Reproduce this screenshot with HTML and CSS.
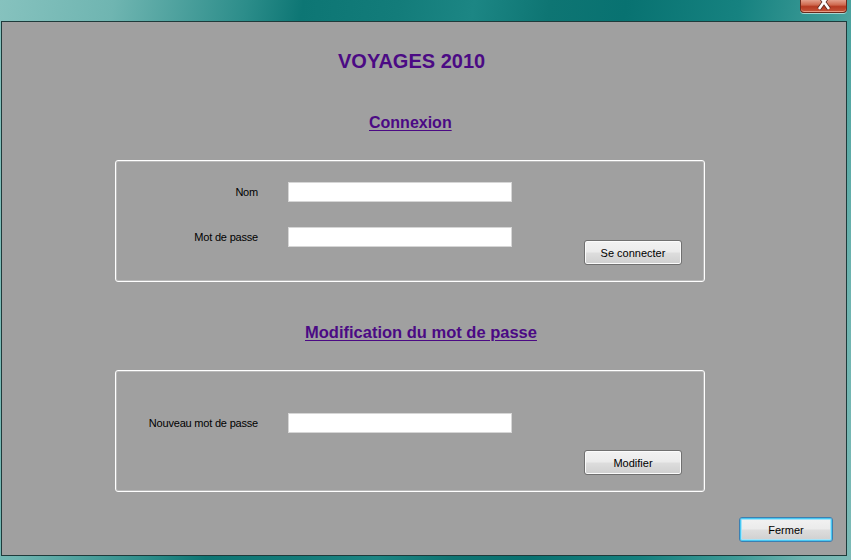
FILE: index.html
```html
<!DOCTYPE html>
<html lang="fr">
<head>
<meta charset="utf-8">
<title>VOYAGES 2010</title>
<link rel="stylesheet" href="styles.css">
</head>
<body>
<div class="window">
  <div class="titlebar">
    <div class="close-btn">
      <svg width="20" height="12" viewBox="0 0 20 12" aria-hidden="true">
        <path d="M5 -5 L15 9 M15 -5 L5 9" stroke="#5a2a20" stroke-width="4.2" stroke-linecap="butt"/>
        <path d="M5 -5 L15 9 M15 -5 L5 9" stroke="#ffffff" stroke-width="2.6" stroke-linecap="butt"/>
      </svg>
    </div>
  </div>
  <div class="client">
    <h1 class="app-title">VOYAGES 2010</h1>
    <h2 class="section-title sec-login">Connexion</h2>
    <div class="group group-login">
      <div class="row">
        <label class="lbl">Nom</label>
        <div class="field"></div>
      </div>
      <div class="row row-last">
        <label class="lbl">Mot de passe</label>
        <div class="field"></div>
        <button class="btn btn-login">Se connecter</button>
      </div>
    </div>
    <h2 class="section-title sec-change">Modification du mot de passe</h2>
    <div class="group group-change">
      <div class="row">
        <label class="lbl">Nouveau mot de passe</label>
        <div class="field"></div>
      </div>
      <button class="btn btn-modify">Modifier</button>
    </div>
    <button class="btn btn-close">Fermer</button>
  </div>
</div>
</body>
</html>
```

FILE: styles.css
```css
html, body {
  margin: 0;
  padding: 0;
}
body {
  width: 851px;
  height: 560px;
  overflow: hidden;
  font-family: "Liberation Sans", Arial, sans-serif;
}
.window {
  width: 851px;
  height: 560px;
  background: linear-gradient(100deg, #86c2be 0%, #6fb5b1 12%, #2c8d8a 26%, #0d7674 32%, #137c7a 42%, #1c8684 50%, #0e7573 58%, #087271 66%, #168280 78%, #3f9c98 88%, #6fb4b0 95%, #7cbab6 100%);
  display: flex;
  flex-direction: column;
}
.titlebar {
  height: 21px;
  flex: none;
  display: flex;
  justify-content: flex-end;
  align-items: flex-start;
  padding-right: 4px;
}
.close-btn {
  width: 45px;
  height: 12px;
  border: 1px solid #6a2a1c;
  border-top: 0;
  border-radius: 0 0 4px 4px;
  background: linear-gradient(#e4a08c 0%, #cf6a50 40%, #b63b22 55%, #c4553a 100%);
  box-shadow: inset 0 -1px 0 #e79a84, 0 1px 0 #a7d6d3;
  display: flex;
  justify-content: center;
  align-items: flex-start;
  overflow: hidden;
}
.client {
  margin-left: 1px;
  width: 844px;
  height: 533px;
  border: 1px solid #1e3b3b;
  background: #a0a0a0;
  display: flex;
  flex-direction: column;
  align-items: flex-start;
}
.app-title {
  margin: 28px 0 0 336px;
  font-size: 20px;
  line-height: 22px;
  font-weight: bold;
  color: #4b0a84;
}
.section-title {
  margin: 0;
  font-size: 16px;
  line-height: 19px;
  font-weight: bold;
  color: #4b0a84;
  text-decoration: underline;
  text-decoration-thickness: 1px;
  text-underline-offset: 2px;
}
.sec-login {
  margin: 41px 0 0 367px;
}
.sec-change {
  margin: 41px 0 0 303px;
  font-size: 16.5px;
}
.group {
  margin: 28px 0 0 113px;
  width: 590px;
  height: 122px;
  box-sizing: border-box;
  border: 1px solid #ffffff;
  border-radius: 3px;
  box-shadow: inset 0 0 0 1px #b9b9b9;
  display: flex;
  flex-direction: column;
  align-items: flex-start;
}
.group-login {
  padding-top: 21px;
}
.group-change {
  padding-top: 42px;
}
.row {
  display: flex;
  align-items: center;
}
.group-login .row + .row {
  margin-top: 25px;
}
.row-last {
  align-items: flex-start;
}
.lbl {
  width: 142px;
  flex: none;
  text-align: right;
  font-size: 11px;
  letter-spacing: -0.2px;
  line-height: 20px;
  color: #000;
}
.field {
  margin-left: 30px;
  width: 224px;
  height: 20px;
  box-sizing: border-box;
  background: #ffffff;
  border: 1px solid #d6d6d6;
}
.btn {
  box-sizing: border-box;
  height: 25px;
  padding: 0;
  font-family: "Liberation Sans", Arial, sans-serif;
  font-size: 11px;
  color: #000;
  border: 1px solid #707070;
  border-radius: 3px;
  background: linear-gradient(#f2f2f2 0%, #ebebeb 48%, #dddddd 52%, #cfcfcf 100%);
  box-shadow: inset 0 0 0 1px #fbfbfb;
}
.btn-login {
  width: 98px;
  margin: 13px 0 0 72px;
}
.btn-modify {
  width: 98px;
  margin: 17px 0 0 468px;
}
.btn-close {
  width: 94px;
  margin: 25px 0 0 737px;
  border-color: #3c7fb1;
  box-shadow: inset 0 0 0 1px #48c8f2, inset 0 0 0 2px #a6e3f8;
}
```
